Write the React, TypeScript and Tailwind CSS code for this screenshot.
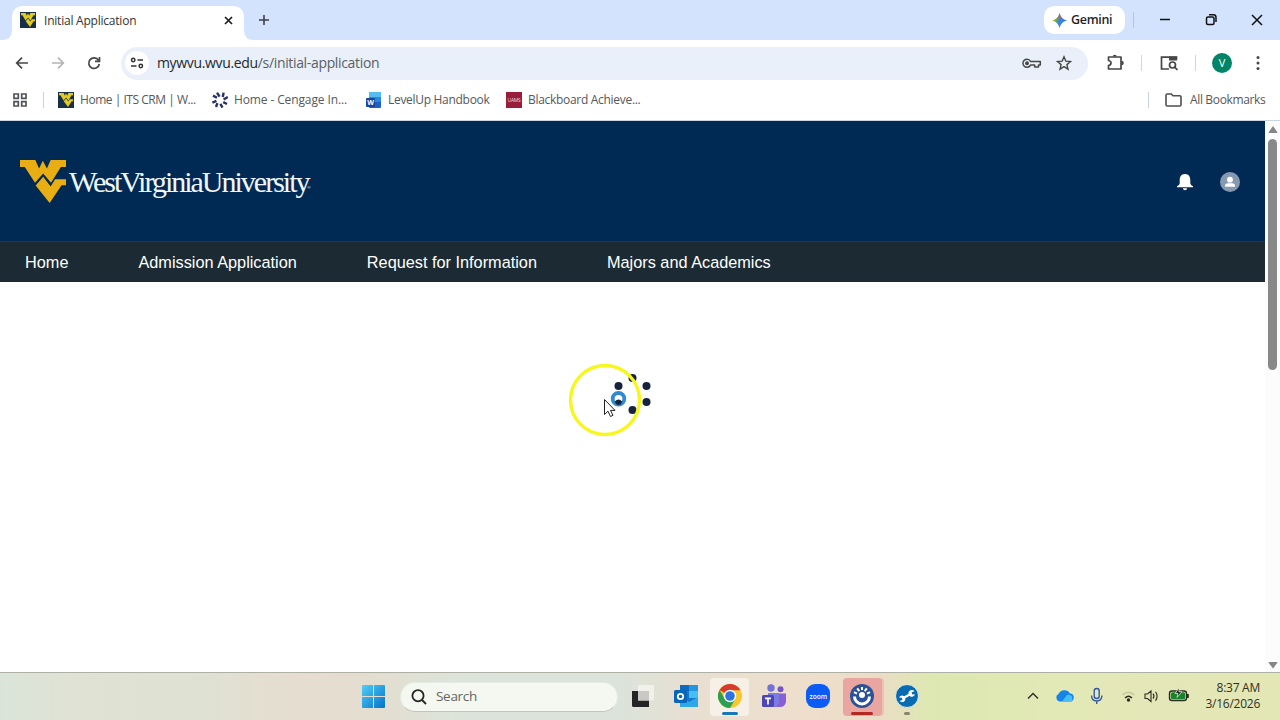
import type { ReactNode } from 'react';

const ui = "font-['Open_Sans','Noto_Sans',sans-serif]";

function WvuMark({ className }: { className?: string }) {
  return (
    <svg viewBox="0 0 135 130" preserveAspectRatio="none" className={className} fill="currentColor">
      <path d="M0 0H45L56 26L67 2L79 26L90 0H135V21H120L91 69L68 41L44 69L14 21H0Z" />
      <path d="M46 77L68 51L90 80L103 58H135V76H122L87 130Z" />
    </svg>
  );
}

function Favicon() {
  return (
    <span className="flex size-4 shrink-0 items-center justify-center bg-[#17304a] text-[#e6cb1c]">
      <WvuMark className="size-[14px]" />
    </span>
  );
}

function Bookmark({ icon, label, className }: { icon: ReactNode; label: string; className: string }) {
  return (
    <div className={`flex shrink-0 items-center ${className}`}>
      <span className="mr-[6px] flex w-4 shrink-0">{icon}</span>
      <span className="whitespace-nowrap">{label}</span>
    </div>
  );
}

function TabStrip() {
  return (
    <div className="flex h-10 items-end bg-[#d3e3fd] text-[#1f1f1f]">
      <svg width="12" height="10" className="shrink-0 fill-white">
        <path d="M12 0V10H2Q12 10 12 0Z" />
      </svg>
      <div className="flex h-[34px] w-[232px] shrink-0 items-center rounded-t-[10px] bg-white pb-[6px] pl-2">
        <Favicon />
        <span className="ml-2 mt-px w-[135px] whitespace-nowrap text-[12px] tracking-[-0.22px] text-[#333]">Initial Application</span>
        <svg width="9" height="9" viewBox="0 0 9 9" className="ml-[45px]" stroke="#1f1f1f" strokeWidth="1.7">
          <path d="M1 1L8 8M8 1L1 8" />
        </svg>
      </div>
      <svg width="10" height="10" className="shrink-0 fill-white">
        <path d="M0 0V10H10Q0 10 0 0Z" />
      </svg>
      <svg width="12" height="12" className="mb-[14px] ml-[4px] shrink-0" stroke="#3c4048" strokeWidth="1.6">
        <path d="M6 1V11M1 6H11" />
      </svg>
      <div className="ml-auto flex h-10 items-center">
        <div className="flex h-7 w-[81px] items-center rounded-[10px] bg-white pl-2">
          <svg width="15" height="15" viewBox="0 0 16 16" className="shrink-0">
            <defs>
              <linearGradient id="gem" x1="0" y1="0.2" x2="1" y2="0.5">
                <stop offset="0.1" stopColor="#f0b429" />
                <stop offset="0.38" stopColor="#4caa63" />
                <stop offset="0.55" stopColor="#3b82e8" />
                <stop offset="1" stopColor="#3979ef" />
              </linearGradient>
            </defs>
            <path d="M8 0Q9.5 6.5 16 8Q9.5 9.5 8 16Q6.5 9.5 0 8Q6.5 6.5 8 0Z" fill="url(#gem)" />
            <path d="M8 0Q8.8 4 10.8 5.7L6.3 5.5Q7.5 3 8 0Z" fill="#e0525b" />
          </svg>
          <span className="ml-1 mt-px text-[12.5px] font-semibold tracking-[-0.3px]">Gemini</span>
        </div>
        <span className="ml-2 h-4 w-px bg-[#b5c3e2]" />
        <svg width="146" height="20" viewBox="0 0 146 20" fill="none" stroke="#111" strokeWidth="1.5">
          <path d="M26 9.5H36M118 5L128 15M128 5L118 15" />
          <rect x="72.5" y="7" width="7.5" height="7.5" rx="1.5" />
          <path d="M75 4.8H79.5Q82 4.8 82 7.5V12" />
        </svg>
      </div>
    </div>
  );
}

function Toolbar() {
  return (
    <div className="flex h-[46px] items-center bg-white">
      <svg width="121" height="30" viewBox="0 0 121 30" className="shrink-0" fill="none" stroke="#474747" strokeWidth="1.7">
        <path d="M28 15H17M22 9.7L16.7 15L22 20.3" />
        <path d="M52 15H63M58 9.7L63.3 15L58 20.3" stroke="#b4b4b4" />
        <path d="M98.5 12.2A5.3 5.3 0 1 0 99.3 16M99.5 9V13.3H95" />
      </svg>
      <div className="flex h-[33px] w-[967px] shrink-0 items-center rounded-full bg-[#e9f0f9] pl-1">
        <span className="flex size-6 items-center justify-center rounded-full bg-white">
          <svg width="14" height="12" viewBox="0 0 14 12" fill="none" stroke="#333" strokeWidth="1.5">
            <circle cx="3.2" cy="3" r="1.7" />
            <path d="M7.5 3H13M1 9H6.5" />
            <circle cx="10.8" cy="9" r="1.7" />
          </svg>
        </span>
        <span className="mb-px ml-2 whitespace-nowrap text-[14px] tracking-[-0.34px] text-[#5a5f66]">
          <span className="text-[#24292e]">mywvu.wvu.edu</span>/s/initial-application
        </span>
        <svg width="74" height="20" viewBox="0 0 74 20" className="ml-auto" fill="none" stroke="#474747" strokeWidth="1.5">
          <path d="M16.5 8.5A4 4 0 1 0 16.5 12.1H20.7V14H24.5V12.1H26.3V8.5Z" strokeLinejoin="round" />
          <circle cx="13" cy="10.3" r="1.2" fill="#474747" />
          <path d="M50 3.8L51.8 8.1L56.5 8.5L52.9 11.6L54 16.2L50 13.7L46 16.2L47.1 11.6L43.5 8.5L48.2 8.1Z" strokeWidth="1.4" />
        </svg>
      </div>
      <svg width="123" height="24" viewBox="0 0 123 24" className="shrink-0" fill="none" stroke="#474747" strokeWidth="1.7">
        <path d="M20.5 6H33V18H20.5V14.5Q23 14 23 12T20.5 9.5Z" strokeLinejoin="round" />
        <path d="M24.5 5.5A2.3 2.3 0 0 1 29 5.5ZM33.5 9.7A2.3 2.3 0 0 1 33.5 14.3Z" fill="#474747" stroke="none" />
        <path d="M53.5 4V20M107.5 4V20" stroke="#d2d6e2" strokeWidth="1" />
        <path d="M81 18H73.5V6.2H88.5V8.5" />
        <path d="M81 5.5H89V9.5H81Z" fill="#474747" stroke="none" />
        <circle cx="84.5" cy="14" r="3" />
        <path d="M86.7 16.2L89.5 19" />
      </svg>
      <span className={`ml-px flex size-5 shrink-0 items-center justify-center rounded-full bg-[#008568] text-[11px] text-white ${ui}`}>V</span>
      <svg width="48" height="20" className="shrink-0" fill="#474747">
        <circle cx="26" cy="4.5" r="1.5" />
        <circle cx="26" cy="10" r="1.5" />
        <circle cx="26" cy="15.5" r="1.5" />
      </svg>
    </div>
  );
}

function BookmarksBar() {
  return (
    <div className="flex h-[35px] items-center border-b border-[#c9d5e2] bg-white pb-[7px] pl-[13px] text-[12px] tracking-[-0.3px] text-[#55585c]">
      <svg width="14" height="14" viewBox="0 0 14 14" fill="none" stroke="#505358" strokeWidth="1.7" className="mt-px shrink-0">
        <path d="M1 1H5.3V5.3H1ZM8.7 1H13V5.3H8.7ZM1 8.7H5.3V13H1ZM8.7 8.7H13V13H8.7Z" />
      </svg>
      <span className="ml-[16px] h-4 w-px shrink-0 bg-[#cbd0dd]" />
      <Bookmark className="ml-[14px] w-[154px] tracking-[-0.47px]" icon={<Favicon />} label="Home | ITS CRM | W..." />
      <Bookmark
        className="w-[154px] tracking-[-0.12px]"
        icon={
          <svg width="16" height="16" viewBox="0 0 16 16" stroke="#293067" strokeWidth="2.4">
            <path d="M5 .8L7.6 4.6M11.6 .6L10.8 5M15.8 5L11.6 7.6M15 12L11.2 10.2M10.5 15.6L8.4 11.8M4 15L5.4 11.2M.4 10.6L4.4 8.8M1 3.6L5 5.8" />
          </svg>
        }
        label="Home - Cengage In..."
      />
      <Bookmark
        className="w-[140px]"
        icon={
          <svg width="15" height="16" viewBox="0 0 15 16">
            <rect x="3" width="12" height="16" rx="1" fill="#1d5fc4" />
            <path d="M3 0H15V5H3Z" fill="#55bdf0" />
            <path d="M3 5H15V10H3Z" fill="#258be2" />
            <rect y="6" width="9" height="9" rx="1" fill="#1647a0" />
            <text x="1.2" y="13" fontSize="7" fontWeight="700" fill="#fff">W</text>
          </svg>
        }
        label="LevelUp Handbook"
      />
      <Bookmark
        className="w-[160px]"
        icon={
          <svg width="16" height="16">
            <path d="M0 0H16V16H0Z" fill="#981e3b" />
            <text x="1.5" y="10" fontSize="5" textLength="13" fill="#f2d7de">UAMS</text>
          </svg>
        }
        label="Blackboard Achieve..."
      />
      <span className="ml-auto h-4 w-px bg-[#cbd0dd]" />
      <svg width="17" height="14" viewBox="0 0 17 14" className="ml-[16px]" fill="none" stroke="#4b4e52" strokeWidth="1.6">
        <path d="M1 2.3Q1 1 2.3 1H6.3L8 2.8H14.7Q16 2.8 16 4.1V11.7Q16 13 14.7 13H2.3Q1 13 1 11.7Z" />
      </svg>
      <span className="ml-[8px] w-[90px] whitespace-nowrap tracking-[-0.35px]">All Bookmarks</span>
    </div>
  );
}

function SiteHeader() {
  return (
    <header className="flex h-[120px] items-center bg-[#002a54] pl-5 pt-px text-[#e8ae14]">
      <WvuMark className="h-[43px] w-[46px] shrink-0" />
      <div className="ml-[3px] flex items-end whitespace-nowrap font-['Liberation_Serif',serif] text-[#f1f6fb]">
        <span className="w-[238px] text-[30px] leading-[36px] tracking-[-2px]">WestVirginiaUniversity</span>
        <span className="mb-[9px] text-[5px] leading-[6px]">®</span>
      </div>
      <svg width="20" height="20" viewBox="0 0 20 20" className="ml-auto mr-[25px]" fill="#fff">
        <path d="M10 2C6 2 4.7 5 4.7 8V11.5Q4.5 13 2 14.3V15.3H18V14.3Q15.5 13 15.3 11.5V8C15.3 5 14 2 10 2ZM7.8 16.3H12.2Q11.8 18.3 10 18.3T7.8 16.3Z" />
      </svg>
      <svg width="20" height="20" viewBox="0 0 20 20" className="mr-[25px]">
        <circle cx="10" cy="10" r="10" fill="#8799b0" />
        <circle cx="10" cy="7.7" r="2.9" fill="#fff" />
        <path d="M5 14.7V13.5Q5 11.8 7.5 11.3H12.5Q15 11.8 15 13.5V14.7Z" fill="#fff" />
      </svg>
    </header>
  );
}

function SiteNav() {
  return (
    <nav className="flex h-[41px] items-center gap-[70px] border-t border-[#193a55] bg-[#1c2b33] pl-[25px] pt-px font-['Liberation_Sans',Arial,sans-serif] text-[16.3px] text-white">
      <span>Home</span>
      <span>Admission Application</span>
      <span>Request for Information</span>
      <span>Majors and Academics</span>
    </nav>
  );
}

function Scrollbar() {
  return (
    <div className="flex w-[15px] shrink-0 flex-col items-center bg-[#fcfcfc] pb-[3px] pt-[5px]">
      <svg width="10" height="8" fill="#858585">
        <path d="M5 0L9.5 6.5Q9.5 7 9 7H1Q.5 7 .5 6.5Z" />
      </svg>
      <span className="mt-[5px] h-[231px] w-[9px] rounded-full bg-[#888]" />
      <svg width="10" height="8" fill="#858585" className="mt-auto">
        <path d="M5 7.5L.5 1.5Q.5 1 1 1H9Q9.5 1 9.5 1.5Z" />
      </svg>
    </div>
  );
}

// Loading dots with the pointer and its highlight ring on top
function Spinner() {
  return (
    <svg width="90" height="80" viewBox="565 360 90 80" className="absolute left-[565px] top-[239px]">
      <g fill="#16233b">
        <circle cx="632.5" cy="378" r="4" />
        <circle cx="618.5" cy="386" r="4" />
        <circle cx="646.5" cy="386" r="4" />
        <circle cx="646.5" cy="402" r="4" />
        <circle cx="632.5" cy="410" r="4" />
      </g>
      <circle cx="605" cy="400" r="34.5" fill="none" stroke="#f7f71c" strokeWidth="3.4" />
      <circle cx="618.5" cy="398.8" r="5.8" fill="#fff" stroke="#3189cf" strokeWidth="3.8" />
      <path d="M614.8 401.5Q618.5 397.6 622.2 401.5Q621 405 618.5 405T614.8 401.5Z" fill="#16233b" />
      <path d="M604.5 399.5V414.5L608 411.2L610.5 416.5L613 415.3L610.5 410.4H615Z" fill="#fff" stroke="#222" />
    </svg>
  );
}

function TaskIcon({ children, className = '', bar }: { children: ReactNode; className?: string; bar?: string }) {
  return (
    <div className={`flex h-[38px] w-[39px] shrink-0 flex-col items-center rounded ${className}`}>
      <svg width="24" height="24" viewBox="0 0 24 24" className="mt-[6px]">{children}</svg>
      <span className={`mt-[4px] h-[3px] rounded-full ${bar ?? ''}`} />
    </div>
  );
}

function Taskbar() {
  return (
    <div className="flex h-12 items-center border-t border-[#aeb0a5] bg-[linear-gradient(90deg,#dae5d9_0px,#dfe2d4_60px,#dfe1d3_200px,#e6ddcf_300px,#e3ded0_380px,#dce4da_460px,#dce3da_620px,#e9dfd1_700px,#eedfcc_800px,#eaddc6_880px,#dde8b1_930px,#e4e8b8_1100px,#e3e7b6_1280px)]">
      <svg width="23" height="23" viewBox="0 0 23 23" className="ml-[362px] shrink-0">
        <defs>
          <linearGradient id="win" x1="0" y1="0" x2="1" y2="1">
            <stop stopColor="#53cdf7" />
            <stop offset="1" stopColor="#0672ca" />
          </linearGradient>
        </defs>
        <path d="M0 1Q0 0 1 0H11V11H0ZM12 0H22Q23 0 23 1V11H12ZM0 12H11V23H1Q0 23 0 22ZM12 12H23V22Q23 23 22 23H12Z" fill="url(#win)" />
      </svg>
      <div className="ml-[15px] flex h-[30px] w-[218px] shrink-0 items-center rounded-full border border-b-[#bfc5ba] border-l-[#e4ebe2] border-r-[#e4ebe2] border-t-[#e4ebe2] bg-[#f4f8f1] pl-[9px]">
        <svg width="18" height="18" viewBox="0 0 18 18" fill="none" stroke="#252525" strokeWidth="1.8">
          <circle cx="8" cy="7.7" r="5.6" />
          <path d="M12 12L16 16" />
        </svg>
        <span className="ml-[8px] text-[13.5px] tracking-[-0.3px] text-[#62665f]">Search</span>
      </div>
      <div className="ml-[4px] flex h-full items-center gap-[5.2px]">
        <TaskIcon>
          <path d="M2 7H12V14H19V23H3.5Q2 23 2 21.5Z" fill="#242424" />
          <path d="M8 1H24V15Q24 16.5 22.5 16.5H8Z" fill="#f4f2ef" fillOpacity="0.85" />
          <path d="M8 7H19V16.5H8Z" fill="#c9c8c4" />
        </TaskIcon>
        <TaskIcon>
          <rect x="6" y="1" width="18" height="22" rx="1.5" fill="#1379ce" />
          <path d="M6 1H15V7H6Z" fill="#0d6abd" />
          <path d="M15 1H24V7H15Z" fill="#2496e0" />
          <path d="M15 7H24V14H15Z" fill="#46bff0" />
          <path d="M6 13L15 18L24 13V22Q24 23 23 23H7Q6 23 6 22Z" fill="#2da8e7" />
          <rect y="6" width="13" height="13" rx="1.5" fill="#0866bb" />
          <circle cx="6.5" cy="12.5" r="2.7" fill="none" stroke="#fff" strokeWidth="1.8" />
        </TaskIcon>
        <TaskIcon className="bg-[#f7f0e6]" bar="w-4 bg-[#1777bd]">
          <circle cx="12" cy="12" r="12" fill="#f8c62e" />
          <path d="M12 12L1.6 6A12 12 0 0 1 22.4 6Z" fill="#d83b2e" />
          <path d="M1.6 6A12 12 0 0 0 12 24L17.2 15H12L6.8 15Z" fill="#2e9f50" />
          <path d="M12 6.2H22.5L17 15.2A6 6 0 0 0 12 6.2Z" fill="#f8c62e" />
          <circle cx="12" cy="12" r="6.2" fill="#fff" />
          <circle cx="12" cy="12" r="4.8" fill="#2c74df" />
        </TaskIcon>
        <TaskIcon>
          <circle cx="9" cy="4" r="3.7" fill="#7172d8" />
          <circle cx="18.5" cy="5.2" r="3" fill="#7654c7" />
          <path d="M14 9.5H24V18Q23 23 18 23H12Z" fill="#8a5ed4" />
          <path d="M6 9H17V19Q16 23.5 10 23Q6 22 6 18Z" fill="#797ce2" />
          <rect y="11" width="12" height="12" rx="1.5" fill="#4c45b8" />
          <path d="M3 14.3H9M6 14.3V20.5" stroke="#fff" strokeWidth="1.7" />
        </TaskIcon>
        <TaskIcon>
          <rect width="24" height="24" rx="9" fill="#0b5cf5" />
          <text x="3.5" y="14.5" fontSize="7" fontWeight="600" textLength="17.5" fill="#fff" lengthAdjust="spacingAndGlyphs">zoom</text>
        </TaskIcon>
        <TaskIcon className="bg-[#e9a5a0] shadow-[2px_0_0_#edc0b6]" bar="w-[22px] bg-[#b22a22]">
          <circle cx="12" cy="12" r="12" fill="#2b5299" />
          <path d="M4.5 12.5A7.5 7.5 0 0 0 19.5 12.5" fill="none" stroke="#fff" strokeWidth="3" />
          <circle cx="12" cy="11" r="3" fill="#fff" />
          <path d="M4 8.2L7 9.7M7.2 4.3L9.3 7.2M12 3V6M16.8 4.3L14.7 7.2M20 8.2L17 9.7" stroke="#fff" strokeWidth="2" />
        </TaskIcon>
        <TaskIcon bar="w-[6px] bg-[#85856d]">
          <circle cx="12" cy="12" r="11.5" fill="#086cb5" stroke="#e8eee5" />
          <path d="M7.5 14.5L16.5 9.5" stroke="#fff" strokeWidth="2.4" />
          <path d="M19.5 7.2L16.7 8.2L16.9 10.3L20 10.6A3.4 3.4 0 1 1 19.5 7.2ZM4 13.5L7 13.8L7.4 15.9L4.6 17A3.3 3.3 0 1 0 4 13.5Z" fill="#fff" />
        </TaskIcon>
      </div>
      <svg width="166" height="30" viewBox="1025 681 166 30" className="mb-px ml-auto shrink-0" fill="none" stroke="#2b2d20" strokeWidth="1.4">
        <path d="M1028 698.5L1033 693.5L1038 698.5" />
        <path d="M1060 701.5A4 4 0 0 1 1058.5 694A6.5 6.5 0 0 1 1070 693.5A4 4 0 0 1 1069.5 701.5Z" fill="#1683e6" stroke="none" />
        <path d="M1062 701.5L1067 695Q1072 694 1072.3 698.5T1069 701.5Z" fill="#48bdf5" stroke="none" />
        <rect x="1094.2" y="688.5" width="5" height="10" rx="2.5" stroke="#35599a" fill="#dce6cb" />
        <path d="M1091.5 695.5Q1091.7 701 1096.7 701T1101.9 695.5M1096.7 701V704" stroke="#35599a" />
        <path d="M1122.5 695Q1128.5 689.5 1134.5 695" stroke="#c3c79e" />
        <path d="M1125 698Q1128.5 694.5 1132 698" />
        <circle cx="1128.5" cy="700" r="1" fill="#2b2d20" />
        <path d="M1145 694V698.5H1147.5L1151 701.5V691L1147.5 694ZM1153 693.7Q1155 696.2 1153 698.7M1155.5 691.8Q1158.7 696.2 1155.5 700.7" strokeWidth="1.1" />
        <rect x="1169.5" y="691" width="17" height="9.5" rx="2.5" fill="#e4ebca" />
        <rect x="1171.5" y="693" width="13" height="5.5" rx="1" fill="#178529" stroke="#178529" />
        <path d="M1187.8 694V698" strokeWidth="2" />
        <path d="M1179 687.5L1175.2 693.5H1178L1177 697.5L1182 691.7H1179Z" fill="#202820" stroke="#e4ebca" strokeWidth=".8" />
      </svg>
      <div className="mb-px mr-5 flex w-[69px] shrink-0 flex-col items-end whitespace-nowrap text-[12px] leading-4 tracking-[-0.25px] text-[#2f3024]">
        <span>8:37 AM</span>
        <span>3/16/2026</span>
      </div>
    </div>
  );
}

export default function App() {
  return (
    <div className={`flex h-[720px] w-[1280px] flex-col overflow-hidden bg-white ${ui}`}>
      <TabStrip />
      <Toolbar />
      <BookmarksBar />
      <div className="relative flex min-h-0 flex-1">
        <main className="flex-1">
          <SiteHeader />
          <SiteNav />
        </main>
        <Scrollbar />
        <Spinner />
      </div>
      <Taskbar />
    </div>
  );
}
